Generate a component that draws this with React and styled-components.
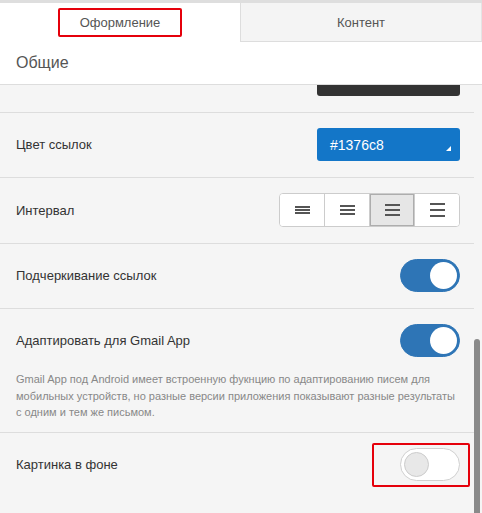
import styled, { createGlobalStyle } from 'styled-components';

const Global = createGlobalStyle`
    body {
        margin: 0;
        background: #f5f5f5;
        font-family: "Liberation Sans", Arial, sans-serif;
    }
`
const Panel = styled.div`
    width: 482px;
    height: 513px;
    display: flex;
    flex-direction: column;
    overflow: hidden;
    background: #f5f5f5;
`
const TopStrip = styled.div`
    height: 3px;
    background: #dedede;
`
const Tabs = styled.div`
    display: flex;
    height: 39px;
`
const Tab = styled.div`
    flex: 1;
    display: flex;
    align-items: center;
    justify-content: center;
    font-size: 13px;
    color: #555;
    background: ${p => p.$active ? '#fff' : '#f4f4f4'};
    border-left: ${p => p.$active ? 'none' : '1px solid #ddd'};
    border-bottom: ${p => p.$active ? 'none' : '1px solid #ddd'};
    border-right: ${p => p.$active ? 'none' : '1px solid #e4e4e4'};
`
const Marked = styled.span`
    display: inline-flex;
    align-items: center;
    border: 2px solid #e5000b;
    border-radius: 2px;
    padding: ${p => p.$pad};
    margin: ${p => p.$margin || '0'};
`
const Header = styled.div`
    height: 42px;
    display: flex;
    align-items: center;
    padding-left: 16px;
    font-size: 16px;
    color: #555;
    background: #fff;
    border-bottom: 1px solid #ddd;
`
const Body = styled.div`
    flex: 1;
    display: flex;
    min-height: 0;
`
const Content = styled.div`
    flex: 1;
    overflow: hidden;
`
const List = styled.div`
    margin-top: -37px;
`
const Track = styled.div`
    width: 8px;
    display: flex;
    flex-direction: column;
`
const Thumb = styled.div`
    margin-top: 254px;
    width: 6px;
    flex: 1;
    background: #8a8a8a;
    border-radius: 3px 3px 0 0;
`
const Setting = styled.div`
    padding: 15px 14px ${p => p.$note ? '11px' : '16px'} 16px;
    border-bottom: 1px solid #ddd;
    &:last-child {
        border-bottom: none;
    }
`
const Row = styled.div`
    display: flex;
    align-items: center;
    justify-content: space-between;
    min-height: 33px;
`
const Label = styled.span`
    font-size: 13px;
    color: #333;
`
const Note = styled.p`
    margin: 14px 0 0;
    font-size: 11px;
    line-height: 16.5px;
    color: #888;
`
const DarkField = styled.div`
    width: 143px;
    height: 33px;
    background: #333;
    border-radius: 3px;
`
const Select = styled.div`
    width: 143px;
    height: 33px;
    box-sizing: border-box;
    display: flex;
    justify-content: space-between;
    align-items: center;
    padding: 0 9px 0 13px;
    background: #1376c8;
    border-radius: 3px;
    color: #fff;
    font-size: 14px;
`
const Caret = styled.span`
    align-self: flex-end;
    margin-bottom: 10px;
    width: 0;
    height: 0;
    border-left: 5px solid transparent;
    border-bottom: 5px solid #fff;
`
const Group = styled.div`
    display: flex;
    height: 34px;
    box-sizing: border-box;
    border: 1px solid #ccc;
    border-radius: 4px;
    overflow: hidden;
    background: #fff;
`
const GroupButton = styled.div`
    width: 44px;
    display: flex;
    align-items: center;
    justify-content: center;
    background: ${p => p.$active ? '#e6e6e6' : '#fff'};
    box-shadow: ${p => p.$active ? 'inset 0 0 0 1px #adadad' : 'none'};
    & + & {
        border-left: 1px solid #ccc;
    }
`
const Switch = styled.div`
    width: 60px;
    height: 33px;
    box-sizing: border-box;
    border-radius: 17px;
    padding: 3px;
    display: flex;
    justify-content: ${p => p.$on ? 'flex-end' : 'flex-start'};
    background: ${p => p.$on ? '#2e75b6' : '#fff'};
    border: 1px solid ${p => p.$on ? '#2e75b6' : '#d0d0d0'};
`
const Knob = styled.div`
    width: ${p => p.$on ? '27px' : '25px'};
    height: ${p => p.$on ? '27px' : '25px'};
    margin: ${p => p.$on ? '-1px' : '0'};
    border-radius: 50%;
    box-sizing: border-box;
    background: ${p => p.$on ? '#fff' : '#e8e8e8'};
    border: ${p => p.$on ? 'none' : '1px solid #ccc'};
`

const SpacingIcon = ({ gap }) => {
    const ys = [0, 1, 2].map(i => i * (2 + gap));
    const h = ys[2] + 2;
    return (
        <svg width="15" height={h} viewBox={`0 0 15 ${h}`}>
            {ys.map(y => <rect key={y} x="0" y={y} width="15" height="2" fill="#555" />)}
        </svg>
    );
}

const Toggle = ({ on }) => (
    <Switch $on={on}><Knob $on={on} /></Switch>
)

export default function App() {
    return (
        <Panel>
            <Global />
            <TopStrip />
            <Tabs>
                <Tab $active>
                    <Marked $pad="5px 20px">Оформление</Marked>
                </Tab>
                <Tab>Контент</Tab>
            </Tabs>
            <Header>Общие</Header>
            <Body>
                <Content>
                    <List>
                        <Setting>
                            <Row><Label /><DarkField /></Row>
                        </Setting>
                        <Setting>
                            <Row>
                                <Label>Цвет ссылок</Label>
                                <Select>#1376c8<Caret /></Select>
                            </Row>
                        </Setting>
                        <Setting>
                            <Row>
                                <Label>Интервал</Label>
                                <Group>
                                    {[1, 2, 3, 4].map(g => (
                                        <GroupButton key={g} $active={g === 3}>
                                            <SpacingIcon gap={g} />
                                        </GroupButton>
                                    ))}
                                </Group>
                            </Row>
                        </Setting>
                        <Setting>
                            <Row><Label>Подчеркивание ссылок</Label><Toggle on /></Row>
                        </Setting>
                        <Setting $note>
                            <Row><Label>Адаптировать для Gmail App</Label><Toggle on /></Row>
                            <Note>
                                Gmail App под Android имеет встроенную фукнцию по адаптированию писем для мобильных устройств, но разные версии приложения показывают разные результаты с одним и тем же письмом.
                            </Note>
                        </Setting>
                        <Setting>
                            <Row>
                                <Label>Картинка в фоне</Label>
                                <Marked $pad="3px 8px 4px 26px" $margin="-5px -10px -6px 0">
                                    <Toggle />
                                </Marked>
                            </Row>
                        </Setting>
                    </List>
                </Content>
                <Track><Thumb /></Track>
            </Body>
        </Panel>
    );
}
